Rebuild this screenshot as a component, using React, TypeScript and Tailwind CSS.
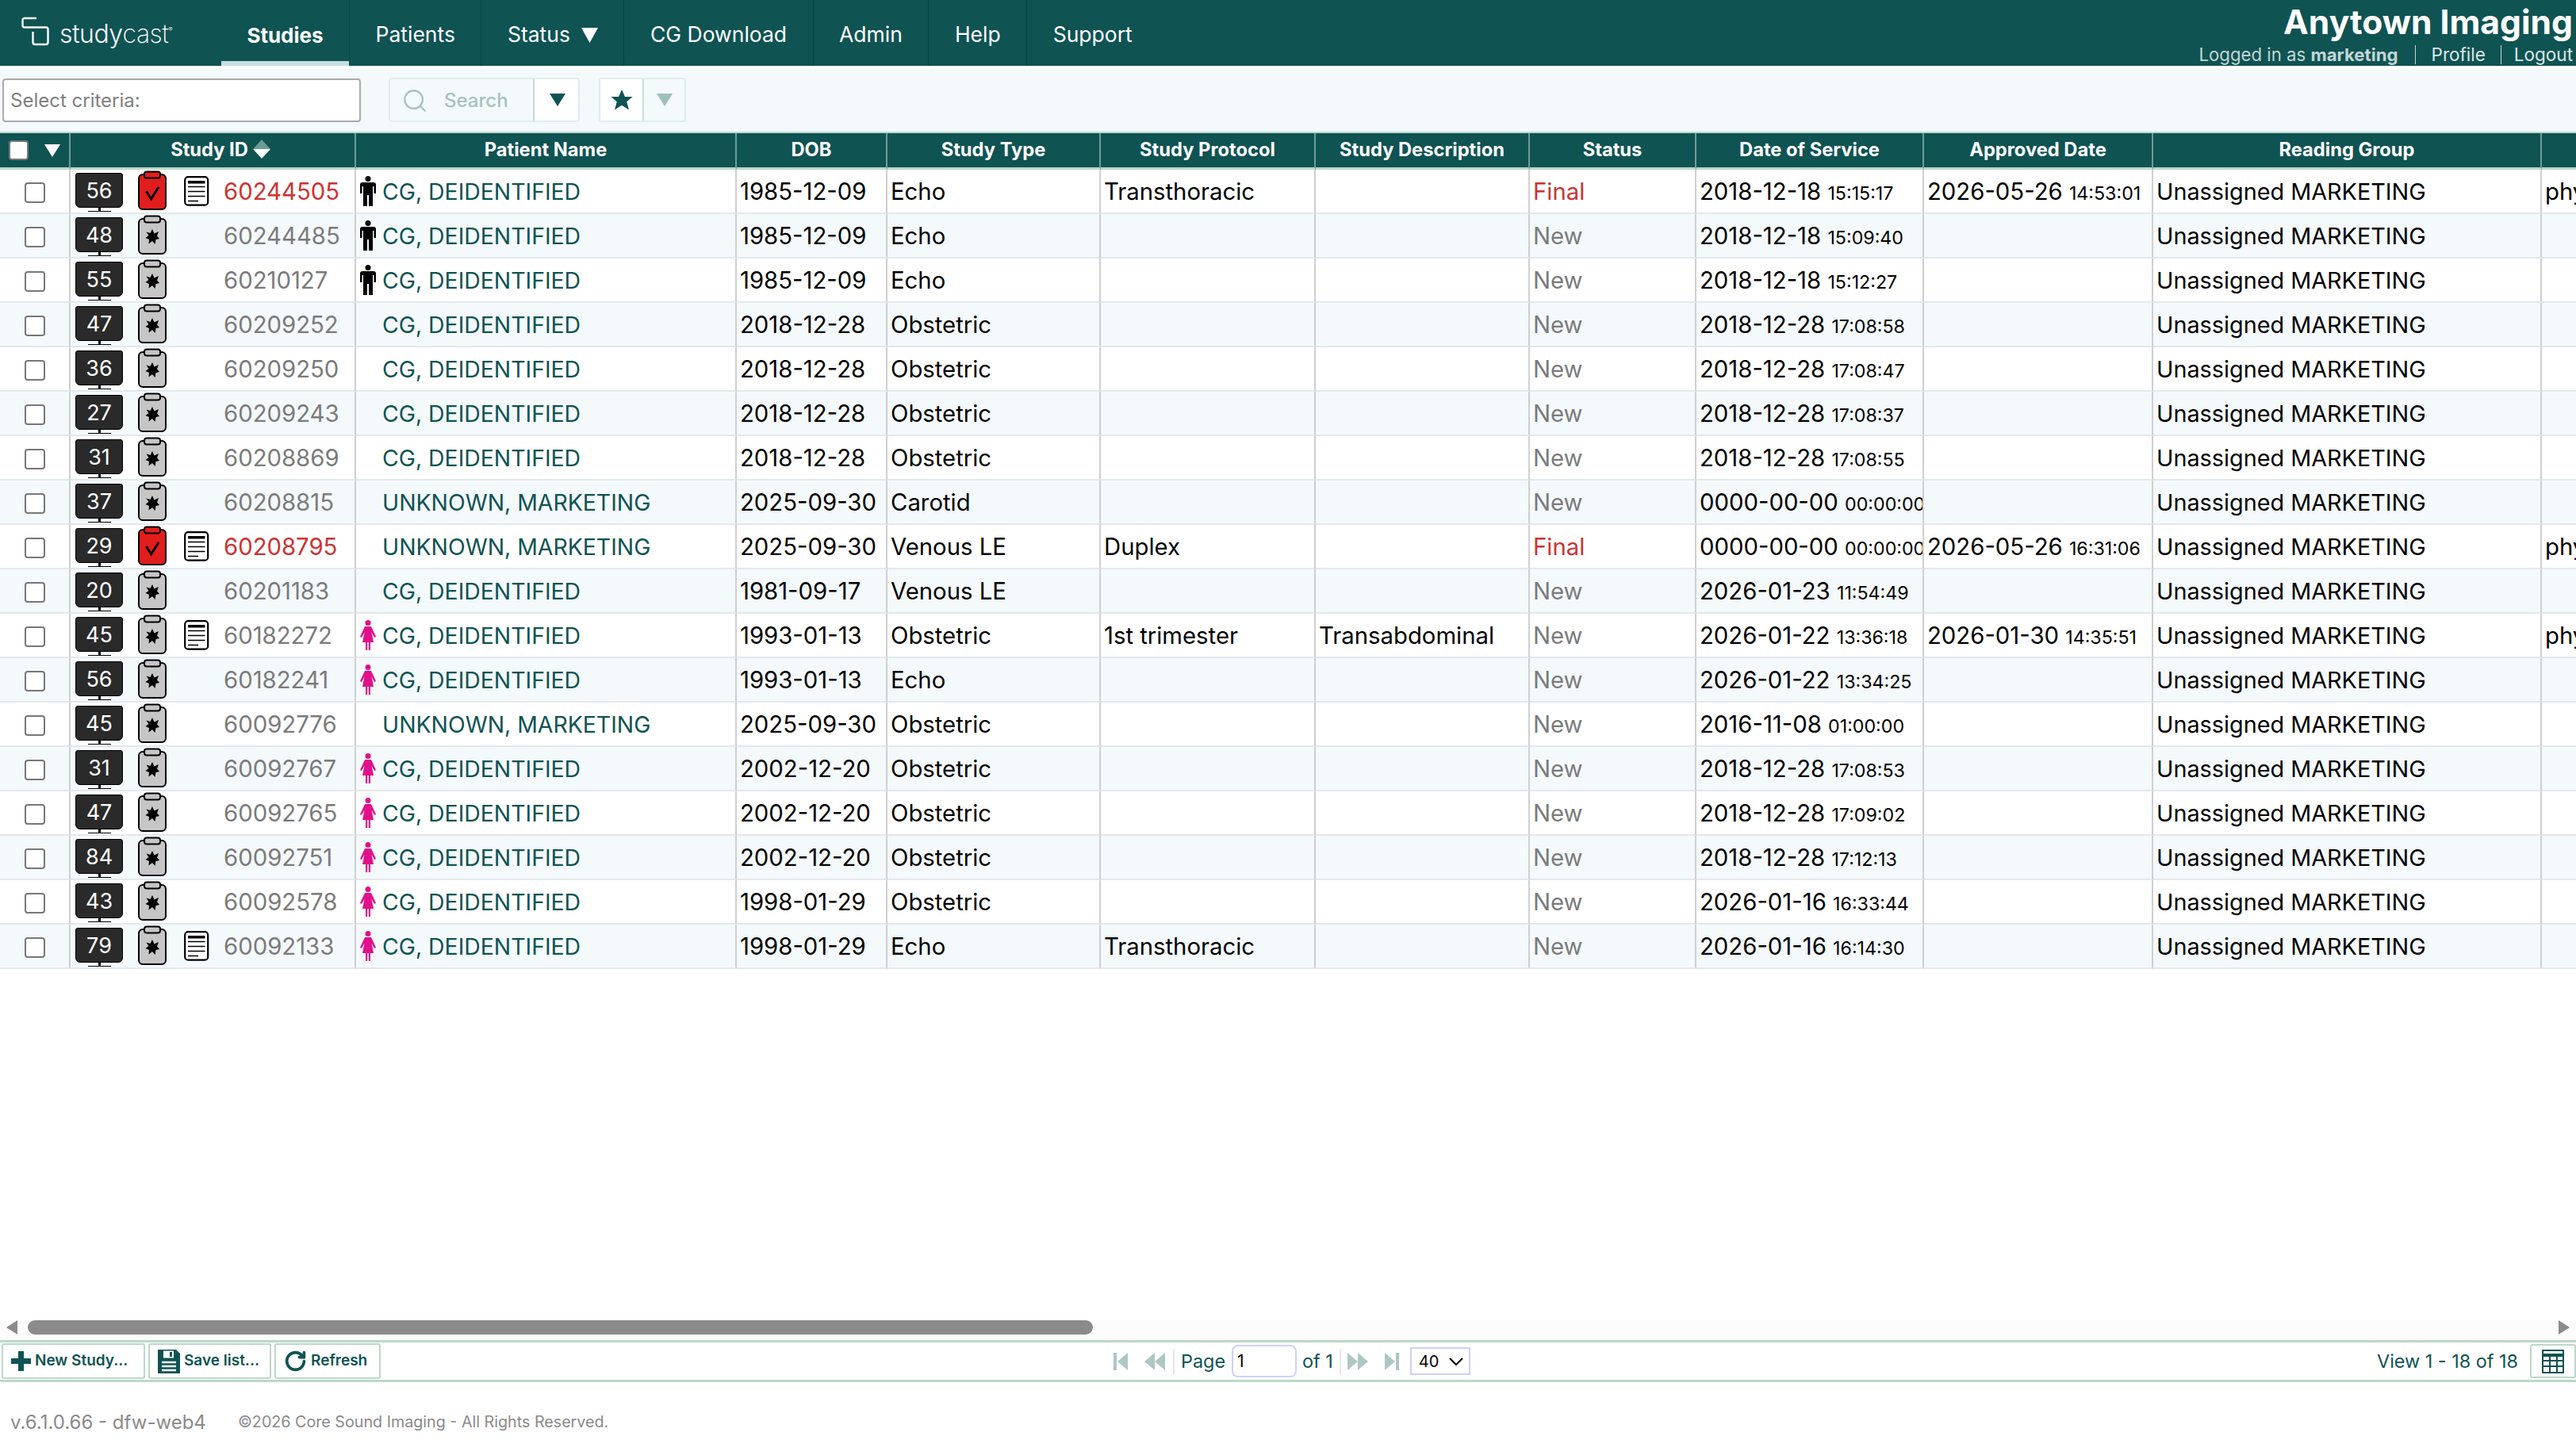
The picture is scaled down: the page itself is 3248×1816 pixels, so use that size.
import { RotateCw, Search } from "lucide-react";

type Row = {
  lab: number;
  id: string;
  name: string;
  dob: string;
  type: string;
  protocol?: string;
  desc?: string;
  final?: boolean;
  report?: boolean;
  sex?: "m" | "f";
  date: string;
  time: string;
  approved?: string;
  approvedTime?: string;
  extra?: boolean;
};

const DEID = "CG, DEIDENTIFIED";
const UNK = "UNKNOWN, MARKETING";

const rows: Row[] = [
  { lab: 56, id: "60244505", name: DEID, dob: "1985-12-09", type: "Echo", protocol: "Transthoracic", final: true, report: true, sex: "m", date: "2018-12-18", time: "15:15:17", approved: "2026-05-26", approvedTime: "14:53:01", extra: true },
  { lab: 48, id: "60244485", name: DEID, dob: "1985-12-09", type: "Echo", sex: "m", date: "2018-12-18", time: "15:09:40" },
  { lab: 55, id: "60210127", name: DEID, dob: "1985-12-09", type: "Echo", sex: "m", date: "2018-12-18", time: "15:12:27" },
  { lab: 47, id: "60209252", name: DEID, dob: "2018-12-28", type: "Obstetric", date: "2018-12-28", time: "17:08:58" },
  { lab: 36, id: "60209250", name: DEID, dob: "2018-12-28", type: "Obstetric", date: "2018-12-28", time: "17:08:47" },
  { lab: 27, id: "60209243", name: DEID, dob: "2018-12-28", type: "Obstetric", date: "2018-12-28", time: "17:08:37" },
  { lab: 31, id: "60208869", name: DEID, dob: "2018-12-28", type: "Obstetric", date: "2018-12-28", time: "17:08:55" },
  { lab: 37, id: "60208815", name: UNK, dob: "2025-09-30", type: "Carotid", date: "0000-00-00", time: "00:00:00" },
  { lab: 29, id: "60208795", name: UNK, dob: "2025-09-30", type: "Venous LE", protocol: "Duplex", final: true, report: true, date: "0000-00-00", time: "00:00:00", approved: "2026-05-26", approvedTime: "16:31:06", extra: true },
  { lab: 20, id: "60201183", name: DEID, dob: "1981-09-17", type: "Venous LE", date: "2026-01-23", time: "11:54:49" },
  { lab: 45, id: "60182272", name: DEID, dob: "1993-01-13", type: "Obstetric", protocol: "1st trimester", desc: "Transabdominal", report: true, sex: "f", date: "2026-01-22", time: "13:36:18", approved: "2026-01-30", approvedTime: "14:35:51", extra: true },
  { lab: 56, id: "60182241", name: DEID, dob: "1993-01-13", type: "Echo", sex: "f", date: "2026-01-22", time: "13:34:25" },
  { lab: 45, id: "60092776", name: UNK, dob: "2025-09-30", type: "Obstetric", date: "2016-11-08", time: "01:00:00" },
  { lab: 31, id: "60092767", name: DEID, dob: "2002-12-20", type: "Obstetric", sex: "f", date: "2018-12-28", time: "17:08:53" },
  { lab: 47, id: "60092765", name: DEID, dob: "2002-12-20", type: "Obstetric", sex: "f", date: "2018-12-28", time: "17:09:02" },
  { lab: 84, id: "60092751", name: DEID, dob: "2002-12-20", type: "Obstetric", sex: "f", date: "2018-12-28", time: "17:12:13" },
  { lab: 43, id: "60092578", name: DEID, dob: "1998-01-29", type: "Obstetric", sex: "f", date: "2026-01-16", time: "16:33:44" },
  { lab: 79, id: "60092133", name: DEID, dob: "1998-01-29", type: "Echo", protocol: "Transthoracic", report: true, sex: "f", date: "2026-01-16", time: "16:14:30" },
];

const navItems = ["Patients", "Status", "CG Download", "Admin", "Help", "Support"];

function Logo() {
  return (
    <div className="flex w-[279px] items-center pl-[27px]">
      <svg width="36" height="38" viewBox="0 0 36 38" fill="none" stroke="white" strokeWidth="2.4" className="mb-[4px]">
        <path d="M19 2H4Q1.5 2 1.5 4.500V11Q1.500 13.500 4 13.500H31Q33.500 13.500 33.500 16V32Q33.500 35 31 35H17Q14.500 35 14.500 32V19" />
      </svg>
      <span className="ml-[12px] mt-[3px] text-[32px] font-light leading-none tracking-[-0.5px] text-white">
        study<span className="font-extralight">cast</span>
        <span className="relative top-[-14px] text-[8px]">®</span>
      </span>
    </div>
  );
}

function Monitor({ value }: { value: number }) {
  return (
    <div className="mt-[3px] flex w-[60px] shrink-0 flex-col items-center">
      <div className="flex h-[44px] w-[60px] items-center justify-center rounded-[3px] rounded-b-[6px] border border-black bg-[#2a2a2a] text-[27px] leading-none text-white">
        {value}
      </div>
      <div className="h-[4px] w-[3px] bg-black" />
      <div className="h-[1px] w-[29px] bg-black" />
    </div>
  );
}

function Clipboard({ final }: { final?: boolean }) {
  const fill = final ? "#e21d1d" : "#c6c6c6";
  return (
    <svg width="36" height="50" viewBox="0 0 36 50" className="shrink-0">
      <rect x="1" y="5" width="34" height="44" rx="5" fill={fill} stroke="black" strokeWidth="2" />
      <rect x="8" y="1.500" width="20" height="8" rx="3" fill={fill} stroke="black" strokeWidth="2" />
      {final ? (
        <path d="M10.500 26L16.500 36L26 21" fill="none" stroke="black" strokeWidth="3" />
      ) : (
        <path d="M18 18L20.500 23.500L26 21L24 26.500L27 30L22.500 31L21.500 37L18 33L13.500 36.500L14 31L9.500 29L13.500 26L10.500 21.500L15.500 23Z" fill="black" />
      )}
    </svg>
  );
}

function Report() {
  return (
    <svg width="32" height="38" viewBox="0 0 32 38" className="shrink-0">
      <rect x="1.200" y="1.200" width="29" height="35.500" rx="4" fill="white" stroke="black" strokeWidth="2.200" />
      <rect x="5" y="6" width="21.500" height="3.500" fill="black" />
      <path d="M5 13.500H26.500M5 19.500H26.500M5 25.500H26.500M5 31.500H18" stroke="black" strokeWidth="1.600" />
    </svg>
  );
}

function Person({ sex }: { sex?: "m" | "f" }) {
  if (sex === "m") {
    return (
      <svg width="20" height="38" viewBox="0 0 20 38" className="shrink-0">
        <circle cx="10" cy="3.500" r="3.500" fill="black" />
        <path d="M3 8H17Q20 8 20 11V22H17.500V13H16V38H11V24H9V38H4V13H2.500V22H0V11Q0 8 3 8Z" fill="black" />
      </svg>
    );
  }
  if (sex === "f") {
    return (
      <svg width="20" height="38" viewBox="0 0 20 38" className="shrink-0">
        <circle cx="10" cy="3.500" r="3.500" fill="#e0118a" />
        <path d="M6 8H14L20 21L18 22L14.500 15.500L17 28H13V38H10.800V28H9.200V38H7V28H3L5.500 15.500L2 22L0 21Z" fill="#e0118a" />
      </svg>
    );
  }
  return <div className="w-[20px] shrink-0" />;
}

function Checkbox({ header }: { header?: boolean }) {
  return (
    <div
      className={
        header
          ? "h-[25px] w-[25px] shrink-0 rounded-[4px] border-2 border-[#777] bg-white"
          : "mx-auto mt-[3px] h-[26px] w-[26px] rounded-[4px] border-2 border-[#777] bg-white"
      }
    />
  );
}

function Triangle({ className }: { className: string }) {
  return (
    <svg viewBox="0 0 10 8" className={className} fill="currentColor" preserveAspectRatio="none">
      <path d="M0 0H10L5 8Z" />
    </svg>
  );
}

function TopNav() {
  return (
    <div className="flex h-[83px] shrink-0 bg-[#0f5353]">
      <Logo />
      <div className="flex h-full w-[161px] items-center justify-center border-b-[6px] border-[#c4dfe2] pt-[11px] text-[26px] font-bold text-white">
        Studies
      </div>
      {navItems.map((item) => (
        <div
          key={item}
          className="flex h-full items-center gap-[14px] border-l border-[#0b4646] px-[32.500px] pt-[5px] text-[26.500px] text-white"
        >
          {item}
          {item === "Status" && <Triangle className="h-[19px] w-[21px] text-white" />}
        </div>
      ))}
      <div className="ml-auto flex flex-col items-end pr-[4px] pt-[1px]">
        <div className="text-[42.600px] font-bold leading-[54px] text-white">Anytown Imaging</div>
        <div className="flex items-center text-[22.200px] leading-[28px] text-[#c3d6d4]">
          <span>
            Logged in as <span className="font-bold">marketing</span>
          </span>
          <span className="ml-[21px] h-[24px] border-l border-[#c3d6d4]" />
          <span className="ml-[20px] text-[22.500px] text-[#dce8e6]">Profile</span>
          <span className="ml-[19px] h-[24px] border-l border-[#c3d6d4]" />
          <span className="ml-[16px] text-[22.500px] text-[#dce8e6]">Logout</span>
        </div>
      </div>
    </div>
  );
}

function FilterBar() {
  return (
    <div className="mt-[4px] flex h-[79px] shrink-0 items-center bg-[#f4f9fc] pl-[3px] pb-[1px]">
      <div className="flex h-[55px] w-[452px] items-center rounded-[4px] border-2 border-[#aaa] bg-white pl-[8px] pt-[2px] text-[24px] text-[#808080]">
        Select criteria:
      </div>
      <div className="ml-[35px] flex h-[56px] w-[241px] rounded-[4px] border-2 border-[#dfeeea]">
        <div className="flex flex-1 items-center gap-[20px] pl-[14px] pt-[2px] text-[#a6c2bf]">
          <Search size={34} strokeWidth={1.600} />
          <span className="text-[24px] font-medium">Search</span>
        </div>
        <div className="flex w-[57px] items-center justify-center rounded-r-[4px] border-l-2 border-[#c5dfd5] bg-white pl-[3px]">
          <Triangle className="h-[16px] w-[20px] text-[#0f5353]" />
        </div>
      </div>
      <div className="ml-[24px] flex h-[56px] w-[110px] rounded-[4px] border-2 border-[#dfeeea]">
        <div className="flex w-[55px] items-center justify-center border-r-2 border-[#c5dfd5] bg-white">
          <svg width="28" height="26" viewBox="0 0 24 23" fill="#0f5353">
            <path d="M12 0L15.500 8H24L17.500 13.500L20 22.500L12 17.500L4 22.500L6.500 13.500L0 8H8.500Z" />
          </svg>
        </div>
        <div className="flex flex-1 items-center justify-center">
          <Triangle className="h-[16px] w-[20px] text-[#9fbfbc]" />
        </div>
      </div>
    </div>
  );
}

const headers = [
  "Patient Name",
  "DOB",
  "Study Type",
  "Study Protocol",
  "Study Description",
  "Status",
  "Date of Service",
  "Approved Date",
  "Reading Group",
  "",
];

function StudyTable() {
  const base = "overflow-hidden whitespace-nowrap border-r-2 border-b-2 border-r-[#cfcfcf] border-b-[#e3e8ea] p-0 pt-[2px]";
  const cell = `${base} pl-[4px]`;
  return (
    <div className="flex-1 overflow-hidden border-t-2 border-[#bcd8c9]">
      <table className="w-[3320px] table-fixed border-separate border-spacing-0 text-[29.300px] text-black">
        <colgroup>
          <col className="w-[89px]" />
          <col className="w-[360px]" />
          <col className="w-[480px]" />
          <col className="w-[190px]" />
          <col className="w-[269px]" />
          <col className="w-[271px]" />
          <col className="w-[270px]" />
          <col className="w-[210px]" />
          <col className="w-[287px]" />
          <col className="w-[289px]" />
          <col className="w-[490px]" />
          <col className="w-[115px]" />
        </colgroup>
        <thead>
          <tr className="h-[46px] bg-[#0f5353] text-[23.700px] font-bold text-white">
            <th className="border-r-2 border-b-[3px] border-r-[#6f9c98] border-b-[#bcd8c9] p-0">
              <div className="flex items-center gap-[20px] pl-[11px]">
                <Checkbox header />
                <Triangle className="h-[16px] w-[20px] text-white" />
              </div>
            </th>
            <th className="border-r-2 border-b-[3px] border-r-[#6f9c98] border-b-[#bcd8c9] p-0">
              <div className="flex items-center justify-center gap-[6px] pl-[20px] pb-[1px]">
                Study ID
                <svg width="22" height="24" viewBox="0 0 22 24" className="mb-[2px]">
                  <path d="M11 0L22 12H0Z" fill="#6c9a96" />
                  <path d="M11 24L22 12H0Z" fill="white" />
                </svg>
              </div>
            </th>
            {headers.map((h, i) => (
              <th
                key={i}
                className="whitespace-nowrap border-r-2 border-b-[3px] border-r-[#6f9c98] border-b-[#bcd8c9] p-0 pb-[1px] text-center"
              >
                {h}
              </th>
            ))}
          </tr>
        </thead>
        <tbody>
          {rows.map((r, i) => {
            const tone = r.final ? "text-[#cc3333]" : "text-[#7b7b7b]";
            return (
              <tr key={r.id} className={i % 2 === 1 ? "h-[56px] bg-[#f4f9fc]" : "h-[56px] bg-white"}>
                <td className="border-r-2 border-b-2 border-r-[#cfcfcf] border-b-[#e3e8ea] p-0">
                  <Checkbox />
                </td>
                <td className="border-r-2 border-b-2 border-r-[#cfcfcf] border-b-[#e3e8ea] p-0">
                  <div className="flex h-[54px] items-center pl-[6px]">
                    <Monitor value={r.lab} />
                    <div className="ml-[19px] mt-[-2px]">
                      <Clipboard final={r.final} />
                    </div>
                    <div className="ml-[22px] w-[50px] shrink-0">{r.report && <Report />}</div>
                    <span className={`${tone} whitespace-nowrap pt-[2px]`}>{r.id}</span>
                  </div>
                </td>
                <td className="overflow-hidden whitespace-nowrap border-r-2 border-b-2 border-r-[#cfcfcf] border-b-[#e3e8ea] p-0">
                  <div className="flex items-center gap-[8px] pl-[5px] text-[28.400px] text-[#0f5353]">
                    <Person sex={r.sex} />
                    <span className="pt-[2px]">{r.name}</span>
                  </div>
                </td>
                <td className={cell}>{r.dob}</td>
                <td className={cell}>{r.type}</td>
                <td className={cell}>{r.protocol}</td>
                <td className={cell}>{r.desc}</td>
                <td className={`${cell} ${tone}`}>{r.final ? "Final" : "New"}</td>
                <td className={cell}>
                  {r.date} <span className="text-[23.200px]">{r.time}</span>
                </td>
                <td className={cell}>
                  {r.approved} <span className="text-[23.200px]">{r.approvedTime}</span>
                </td>
                <td className={`${cell} text-[28.800px]`}>Unassigned MARKETING</td>
                <td className={cell}>{r.extra && "physician"}</td>
              </tr>
            );
          })}
        </tbody>
      </table>
    </div>
  );
}

function ScrollBar() {
  return (
    <div className="flex h-[25px] shrink-0 items-start bg-[#fcfcfc] pl-[8px] pr-[8px]">
      <svg width="14" height="18" viewBox="0 0 14 18" fill="#8b8b8b">
        <path d="M14 0V18L0 9Z" />
      </svg>
      <div className="ml-[13px] h-[18px] w-[1343px] rounded-[9px] bg-[#8b8b8b]" />
      <svg width="14" height="18" viewBox="0 0 14 18" fill="#8b8b8b" className="ml-auto">
        <path d="M0 0V18L14 9Z" />
      </svg>
    </div>
  );
}

function PagerArrow({ flip, bar, double }: { flip?: boolean; bar?: boolean; double?: boolean }) {
  return (
    <svg width="26" height="26" viewBox="0 0 26 26" fill="#adc7c5" className={flip ? "-scale-x-100" : ""}>
      {bar && <rect x="0" y="2" width="4" height="22" />}
      {bar && <path d="M18 2V24L5 13Z" />}
      {double && <path d="M13 2V24L0 13Z" />}
      {double && <path d="M26 2V24L13 13Z" />}
    </svg>
  );
}

function ActionButton({ icon, label, width }: { icon: React.ReactNode; label: string; width: string }) {
  return (
    <div className={`${width} flex h-[45px] items-center gap-[5px] rounded-[3px] border-2 border-[#bcd8c9] bg-white pl-[10px] text-[19px] font-semibold text-[#0f5353]`}>
      {icon}
      {label}
    </div>
  );
}

function BottomBar() {
  return (
    <div className="flex h-[53px] shrink-0 items-center border-y-[3px] border-[#bcd8c9] bg-white text-[23.400px] text-[#0f5353]">
      <div className="flex w-[1404px] shrink-0 gap-[4px] pl-[2px]">
        <ActionButton
          width="w-[181px]"
          label="New Study..."
          icon={
            <svg width="25" height="25" viewBox="0 0 25 25" fill="#0f5353">
              <path d="M9 0H16V9H25V16H16V25H9V16H0V9H9Z" />
            </svg>
          }
        />
        <ActionButton
          width="w-[155px]"
          label="Save list..."
          icon={
            <svg width="28" height="30" viewBox="0 0 28 30">
              <path d="M0 0H23L28 5V30H0Z" fill="#0f5353" />
              <rect x="7" y="1.500" width="13" height="9" fill="white" />
              <rect x="15" y="3" width="3" height="6" fill="#0f5353" />
              <path d="M5 16H23M5 21H23M5 26H23" stroke="white" strokeWidth="2.500" />
            </svg>
          }
        />
        <ActionButton
          width="w-[134px]"
          label="Refresh"
          icon={<RotateCw size={29} strokeWidth={3} color="#0f5353" />}
        />
      </div>
      <PagerArrow bar />
      <div className="ml-[13px]">
        <PagerArrow double />
      </div>
      <div className="ml-[10px] h-[32px] border-l-2 border-[#e8e8e8]" />
      <span className="ml-[8px]">Page</span>
      <div className="ml-[8px] flex h-[41px] w-[82px] items-center rounded-[8px] border-2 border-[#cfcffa] bg-white pl-[5px] text-[21px] text-black">
        1
      </div>
      <span className="ml-[7px]">of 1</span>
      <div className="ml-[8px] h-[32px] border-l-2 border-[#e8e8e8]" />
      <div className="ml-[8px]">
        <PagerArrow double flip />
      </div>
      <div className="ml-[13px]">
        <PagerArrow bar flip />
      </div>
      <div className="ml-[14px] flex h-[35px] w-[76px] items-center gap-[13px] border-2 border-[#cfcffa] bg-white pl-[9px] text-[20px] text-black">
        40
        <svg width="18" height="10" viewBox="0 0 18 10" fill="none" stroke="black" strokeWidth="2">
          <path d="M1 1L9 9L17 1" />
        </svg>
      </div>
      <span className="ml-auto">View 1 - 18 of 18</span>
      <div className="ml-[15px] flex h-[43px] w-[58px] items-center justify-center rounded-[3px] border-2 border-[#bcd8c9]">
        <svg width="28" height="30" viewBox="0 0 28 30" fill="none" stroke="#0f5353" strokeWidth="2">
          <rect x="1" y="1" width="26" height="28" />
          <path d="M1 7H27" strokeWidth="4" />
          <path d="M1 14H27M1 21H27M10 9V29M19 9V29" />
        </svg>
      </div>
    </div>
  );
}

function Footer() {
  return (
    <div className="flex h-[73px] shrink-0 items-center bg-white pl-[13px] pt-[28px] text-[#8a8a8a]">
      <span className="text-[24px]">v.6.1.0.66 - dfw-web4</span>
      <span className="ml-[40px] text-[19.700px]">©2026 Core Sound Imaging - All Rights Reserved.</span>
    </div>
  );
}

export default function App() {
  return (
    <div className="flex h-[1816px] w-[3248px] flex-col overflow-hidden bg-white font-['Inter',sans-serif]">
      <TopNav />
      <FilterBar />
      <StudyTable />
      <ScrollBar />
      <BottomBar />
      <Footer />
    </div>
  );
}
